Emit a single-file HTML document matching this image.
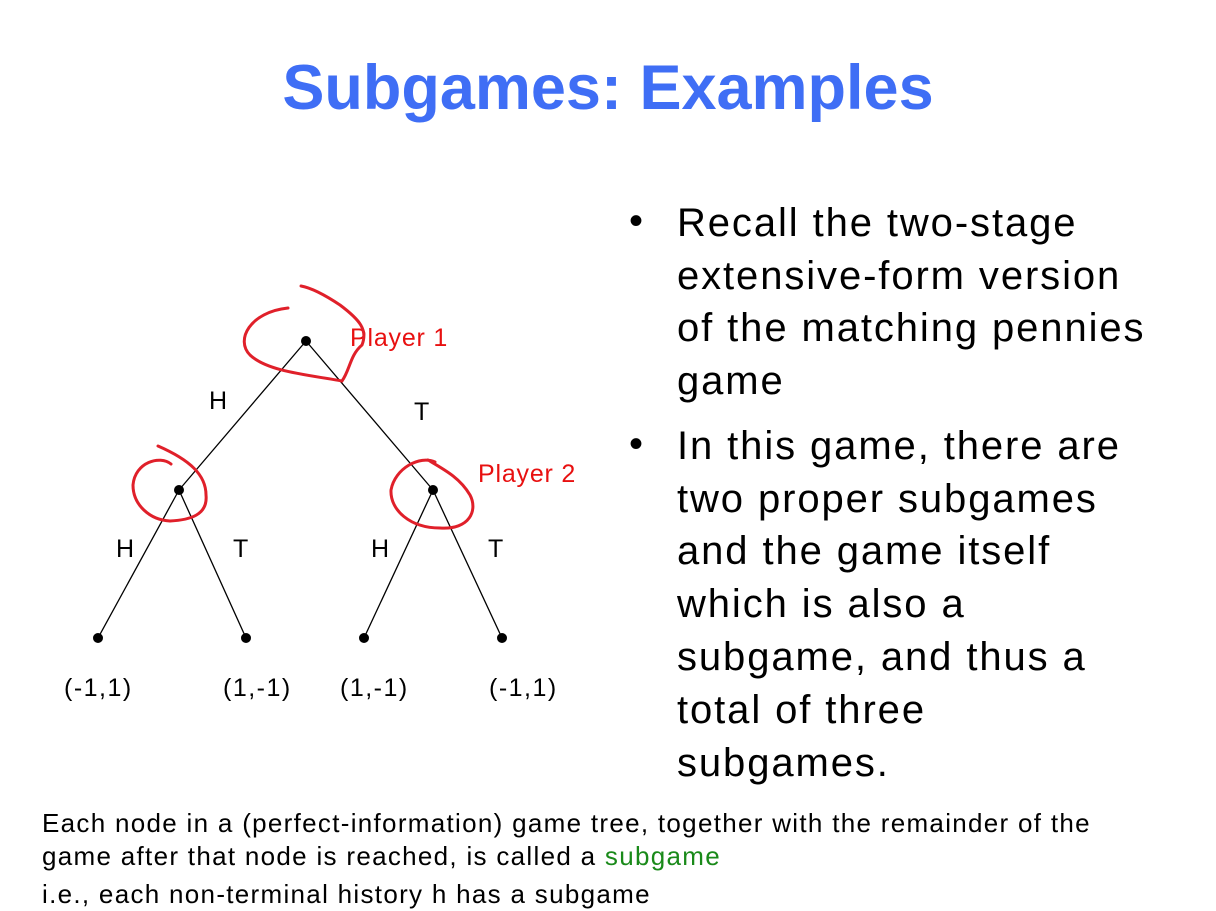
<!DOCTYPE html>
<html><head><meta charset="utf-8"><style>
body{margin:0;width:1216px;height:911px;background:#fff;overflow:hidden;position:relative;font-family:"Liberation Sans",sans-serif}
.t{position:absolute;white-space:nowrap}
#title{left:0;width:1216px;text-align:center;top:52px;font-size:63px;font-weight:bold;color:#3f6ef5;padding-left:-10px}
.b{font-size:40px;letter-spacing:1.9px;color:#000;left:677px}
.bd{font-size:40px;left:629px}
.f{font-size:26px;letter-spacing:1.3px;left:42px}
</style></head><body>
<div class="t" id="title">Subgames: Examples</div>
<div class="t bd" style="top:199px">•</div>
<div class="t b" style="top:201px">Recall the two-stage</div>
<div class="t b" style="top:254px">extensive-form version</div>
<div class="t b" style="top:306px">of the matching pennies</div>
<div class="t b" style="top:359px">game</div>
<div class="t bd" style="top:422px">•</div>
<div class="t b" style="top:424px">In this game, there are</div>
<div class="t b" style="top:477px">two proper subgames</div>
<div class="t b" style="top:529px">and the game itself</div>
<div class="t b" style="top:582px">which is also a</div>
<div class="t b" style="top:635px">subgame, and thus a</div>
<div class="t b" style="top:688px">total of three</div>
<div class="t b" style="top:741px">subgames.</div>
<div class="t f" style="top:808px">Each node in a (perfect-information) game tree, together with the remainder of the</div>
<div class="t f" style="top:841px">game after that node is reached, is called a <span style="color:#1a8a1a">subgame</span></div>
<div class="t f" style="top:879px">i.e., each non-terminal history h has a subgame</div>
<svg width="1216" height="911" style="position:absolute;left:0;top:0">
<g stroke="#000" stroke-width="1.3">
<line x1="306" y1="341" x2="179" y2="490"/><line x1="306" y1="341" x2="433" y2="490"/>
<line x1="179" y1="490" x2="98" y2="638"/><line x1="179" y1="490" x2="246" y2="638"/>
<line x1="433" y1="490" x2="364" y2="638"/><line x1="433" y1="490" x2="502" y2="638"/>
</g>
<g fill="#000"><circle cx="306" cy="341" r="5"/><circle cx="179" cy="490" r="5"/><circle cx="433" cy="490" r="5"/>
<circle cx="98" cy="638" r="5"/><circle cx="246" cy="638" r="5"/><circle cx="364" cy="638" r="5"/><circle cx="502" cy="638" r="5"/></g>
<g font-family="Liberation Sans,sans-serif" font-size="25" fill="#000">
<text x="209" y="409">H</text><text x="414" y="420">T</text>
<text x="116" y="557">H</text><text x="233" y="557">T</text><text x="371" y="557">H</text><text x="488" y="557">T</text>
<g letter-spacing="1.5"><text x="64" y="696">(-1,1)</text><text x="223" y="696">(1,-1)</text><text x="340" y="696">(1,-1)</text><text x="489" y="696">(-1,1)</text></g>
<text x="350" y="346" fill="#e81010" letter-spacing="0.8">Player 1</text><text x="478" y="482" fill="#e81010" letter-spacing="0.8">Player 2</text>
</g>
<g fill="none" stroke="#e0202a" stroke-width="3" stroke-linecap="round">
<path d="M288,308 C250,312 235,340 250,355 C268,372 310,375 342,381 C350,370 350,355 362,345 C368,330 360,320 340,305 C325,295 312,288 301,286"/>
<path d="M171,464 C160,455 135,462 133,485 C133,505 150,520 170,521 C190,520 208,515 206,495 C206,475 190,460 158,446"/>
<path d="M435,462 C420,455 395,468 391,490 C390,510 410,528 440,528 C470,530 478,510 470,495 C460,478 445,470 428,460"/>
</g>
</svg>
</body></html>
